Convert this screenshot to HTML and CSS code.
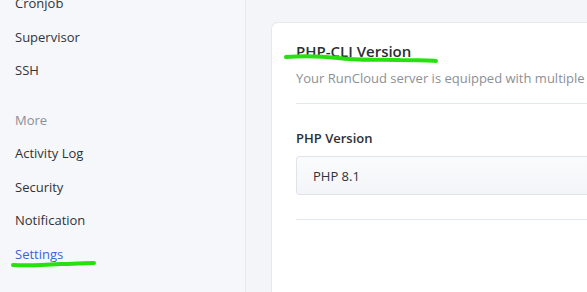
FILE: index.html
```html
<!DOCTYPE html>
<html lang="en">
<head>
    <meta charset="UTF-8">
    <meta name="viewport" content="width=device-width, initial-scale=1.0">
    <title>PHP-CLI Settings</title>
    <link rel="stylesheet" href="styles.css">
</head>
<body>
<div class="sidebar">
    <a href="#" class="cut">Cronjob</a>
    <a href="#">Supervisor</a>
    <a href="#">SSH</a>
    <h3>More</h3>
    <a href="#">Activity Log</a>
    <a href="#">Security</a>
    <a href="#">Notification</a>
    <a href="#" class="active">Settings</a>
</div>
<div class="main">
    <div class="card">
        <h2>PHP-CLI Version</h2>
        <p class="desc">Your RunCloud server is equipped with multiple PHP versions. Choose the default one for the command line.</p>
        <div class="field">
            <label for="php-version">PHP Version</label>
            <div class="select" id="php-version">PHP 8.1</div>
        </div>
    </div>
</div>
<!-- hand-drawn marker strokes over the screenshot -->
<svg class="marks" width="587" height="292" viewBox="0 0 587 292">
    <path d="M286 57 C 300 56, 320 56, 338 58 C 360 61, 380 59, 400 60 C 415 60, 428 60, 436 61" />
    <path d="M13 265 C 30 266, 45 265, 60 264 C 72 264, 84 263, 94 263" />
</svg>
</body>
</html>
```

FILE: styles.css
```css
body {
    font-family: "Open Sans", "Noto Sans", Arial, sans-serif;
    margin: 0;
    padding: 0;
    background-color: #f3f5f9;
    display: flex;
    height: 292px;
    overflow: hidden;
    position: relative;
}
.sidebar {
    width: 246px;
    flex-shrink: 0;
    background-color: #f6f7fb;
    border-right: 1px solid #e4e8ef;
    padding: 0 0 0 15px;
    box-sizing: border-box;
}
.sidebar a {
    display: block;
    color: #2f3338;
    text-decoration: none;
    font-size: 13px;
    height: 33.5px;
    line-height: 33.5px;
}
.sidebar a.cut {
    margin-top: -13px;
}
.sidebar a.active {
    color: #3b63d8;
}
.sidebar h3 {
    margin: 16px 0 0;
    font-size: 13px;
    font-weight: normal;
    color: #8a8f98;
    height: 33.5px;
    line-height: 33.5px;
}
.main {
    flex: 1;
    padding: 22px 0 0 25px;
    overflow: hidden;
}
.card {
    background: #fff;
    border: 1px solid #e4e8ef;
    border-right: none;
    border-radius: 7px 0 0 0;
    padding: 17px 0 0 24px;
    height: 300px;
    width: 400px;
    box-sizing: border-box;
}
.card h2 {
    margin: 0;
    font-size: 15px;
    font-weight: 600;
    color: #2b2f34;
    line-height: 22px;
}
.desc {
    margin: 7px 0 0;
    font-size: 13px;
    color: #8c9096;
    white-space: nowrap;
    line-height: 18px;
    padding-bottom: 16px;
    border-bottom: 1px solid #e3e7ee;
}
.field {
    padding: 25px 0 24px;
    border-bottom: 1px solid #e3e7ee;
}
.field label {
    display: block;
    font-size: 13px;
    font-weight: 600;
    color: #2b2f34;
    margin-bottom: 9px;
}
.select {
    height: 39px;
    line-height: 39px;
    box-sizing: border-box;
    background: linear-gradient(#fafbfc, #f3f5f8);
    border: 1px solid #dfe3ea;
    border-right: none;
    border-radius: 4px 0 0 4px;
    padding-left: 16px;
    font-size: 13px;
    color: #2f3338;
}
.marks {
    position: absolute;
    left: 0;
    top: 0;
    pointer-events: none;
}
.marks path {
    fill: none;
    stroke: #27e10f;
    stroke-width: 4;
    stroke-linecap: round;
}
```
